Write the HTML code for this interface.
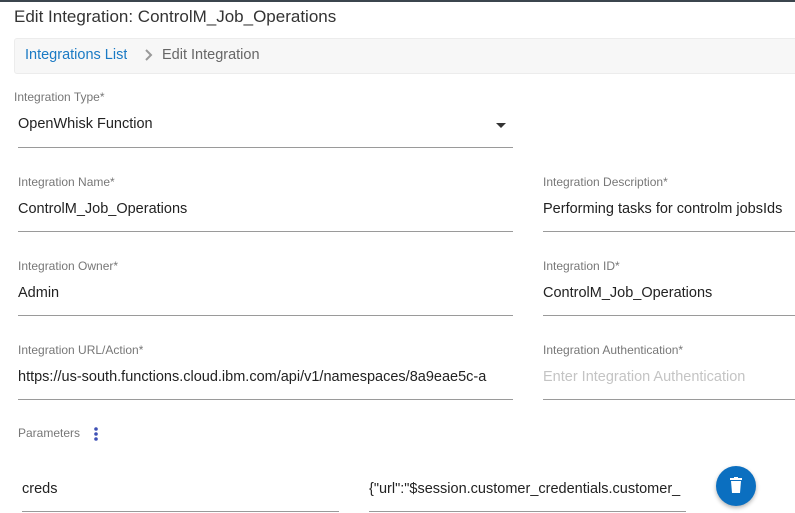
<!DOCTYPE html>
<html><head><style>
body{margin:0;width:795px;height:513px;overflow:hidden;background:#fff;font-family:"Liberation Sans",sans-serif;position:relative;color:#222}
.a{position:absolute;white-space:nowrap;overflow:hidden}
.lab{font-size:12px;color:#777}
.val{font-size:14.5px;color:#222}
.ln{position:absolute;height:1px;background:#9a9a9a}
</style></head><body>
<div class="a" style="left:0;top:0;width:795px;height:2px;background:#3b454d"></div>
<div class="a" style="left:14px;top:7px;font-size:17px;color:#333">Edit Integration: ControlM_Job_Operations</div>
<div class="a" style="left:14px;top:38px;width:790px;height:34px;background:#f7f7f7;border:1px solid #ececec;border-radius:3px"></div>
<div class="a" style="left:25px;top:47px;font-size:14.5px;color:#1a7ac4">Integrations List</div>
<svg class="a" style="left:144px;top:49px" width="10" height="12"><path d="M2 1l5 5-5 5" fill="none" stroke="#999" stroke-width="2"/></svg>
<div class="a" style="left:162px;top:47px;font-size:14.5px;color:#666">Edit Integration</div>

<div class="a lab" style="left:14px;top:90px">Integration Type*</div>
<div class="a val" style="left:18px;top:116px">OpenWhisk Function</div>
<div class="a" style="left:496px;top:123px;width:0;height:0;border-left:5px solid transparent;border-right:5px solid transparent;border-top:5px solid #333"></div>
<div class="ln" style="left:18px;top:147px;width:495px"></div>

<div class="a lab" style="left:18px;top:175px">Integration Name*</div>
<div class="a val" style="left:18px;top:201px">ControlM_Job_Operations</div>
<div class="ln" style="left:18px;top:231px;width:495px"></div>
<div class="a lab" style="left:543px;top:175px">Integration Description*</div>
<div class="a val" style="left:543px;top:201px;width:252px">Performing tasks for controlm jobsIds</div>
<div class="ln" style="left:543px;top:231px;width:252px"></div>

<div class="a lab" style="left:18px;top:259px">Integration Owner*</div>
<div class="a val" style="left:18px;top:285px">Admin</div>
<div class="ln" style="left:18px;top:315px;width:495px"></div>
<div class="a lab" style="left:543px;top:259px">Integration ID*</div>
<div class="a val" style="left:543px;top:285px">ControlM_Job_Operations</div>
<div class="ln" style="left:543px;top:315px;width:252px"></div>

<div class="a lab" style="left:18px;top:343px">Integration URL/Action*</div>
<div class="a val" style="left:18px;top:369px;width:495px">https://us-south.functions.cloud.ibm.com/api/v1/namespaces/8a9eae5c-a</div>
<div class="ln" style="left:18px;top:399px;width:495px"></div>
<div class="a lab" style="left:543px;top:343px">Integration Authentication*</div>
<div class="a val" style="left:543px;top:369px;color:#c4c4c4">Enter Integration Authentication</div>
<div class="ln" style="left:543px;top:399px;width:252px"></div>

<div class="a lab" style="left:18px;top:426px">Parameters</div>
<svg class="a" style="left:92px;top:426px" width="8" height="16"><circle cx="4" cy="3" r="1.8" fill="#3f51b5"/><circle cx="4" cy="8" r="1.8" fill="#3f51b5"/><circle cx="4" cy="13" r="1.8" fill="#3f51b5"/></svg>

<div class="a val" style="left:22px;top:481px">creds</div>
<div class="ln" style="left:22px;top:511px;width:317px"></div>
<div class="a val" style="left:369px;top:481px;width:317px">{"url":"$session.customer_credentials.customer_</div>
<div class="ln" style="left:369px;top:511px;width:317px"></div>
<div class="a" style="left:716px;top:466px;width:40px;height:40px;border-radius:50%;background:#0b6fc0;box-shadow:0 2px 4px rgba(0,0,0,.3)"></div>
<svg class="a" style="left:728px;top:477px" width="16" height="18"><rect x="2" y="1" width="12" height="2" fill="#fff"/><rect x="6" y="0" width="4" height="2" fill="#fff"/><path d="M3 4h10l-1 12H4z" fill="#fff"/></svg>
</body></html>
